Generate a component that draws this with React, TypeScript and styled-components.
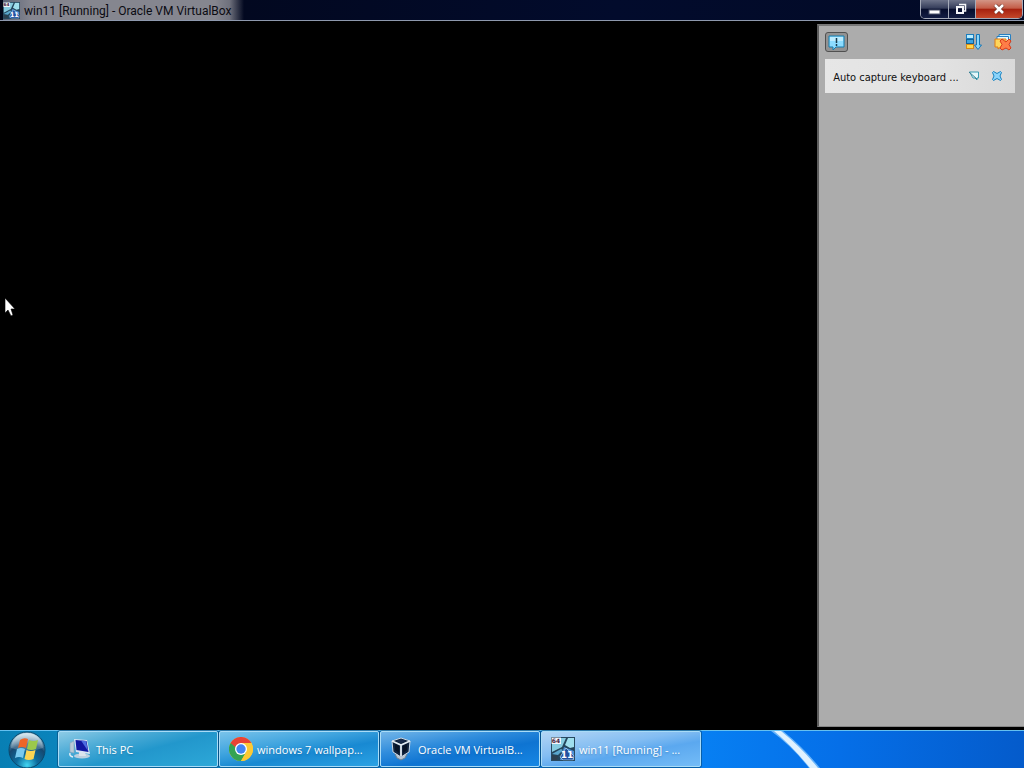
import React from "react";
import styled, { createGlobalStyle, css } from "styled-components";

const Global = createGlobalStyle`
  *, *::before, *::after { box-sizing: border-box; }
  html, body { margin: 0; background: #000; overflow: hidden; }
  body, button { font-family: "Open Sans", "Noto Sans", sans-serif; }
  button { margin: 0; padding: 0; border: 0; background: none; }
  svg { display: block; flex: none; }
`;

const Desktop = styled.div`
  display: flex;
  flex-direction: column;
  height: 100vh;
  background: #000;
`;

const TitleBar = styled.header`
  display: flex;
  align-items: flex-start;
  height: 21px;
  flex: none;
  padding-left: 3px;
  background: linear-gradient(90deg, #020618, #020b2c 60%, #020a26);
  border-bottom: 1px solid #8e99ae;
`;

const TitleGlow = styled.div`
  display: flex;
  align-items: center;
  gap: 4px;
  height: 20px;
  padding-right: 12px;
  background: linear-gradient(90deg, #5a6276 0, #85868f 28px, #85868f 88%, #6f717d 94%, #03092400 100%);
`;

const Title = styled.h1`
  margin: 0;
  padding-top: 2px;
  font-family: Roboto, sans-serif;
  font-size: 12px;
  line-height: 18px;
  font-weight: 400;
  color: #0b0b12;
  white-space: nowrap;
`;

const WindowControls = styled.div`
  display: flex;
  height: 19px;
  margin-left: auto;
  margin-right: 1px;
  border: 1px solid #a5aab8;
  border-top: 0;
  border-radius: 0 0 5px 5px;
  overflow: hidden;
`;

const WindowButton = styled.button<{ $close?: boolean }>`
  display: flex;
  align-items: center;
  justify-content: center;
  width: ${(p) => (p.$close ? 47 : 27)}px;
  background: linear-gradient(#6d7389, #353d5a 45%, #060d2c 52%, #141e44);
  & + & { border-left: 1px solid #a5aab8; }
  ${(p) =>
    p.$close &&
    css`
      background: linear-gradient(#d39586, #c45d48 45%, #a72210 52%, #c4472a);
    `}
`;

const Workspace = styled.main`
  display: flex;
  flex: 1;
  min-height: 0;
  padding: 3px 0;
`;

const GuestScreen = styled.section`
  flex: 1;
  background: #000;
`;

const NotificationCenter = styled.aside`
  width: 20.2%;
  min-width: 206px;
  padding: 6px 9px 0 6px;
  background: #acacac;
  border: 2px solid #5e5e5e;
  border-width: 2px 0 1px 2px;
  border-top-color: #777;
  border-bottom-color: #868686;
`;

const PanelTools = styled.div`
  display: flex;
  align-items: center;
  gap: 12px;
  height: 20px;
  padding-right: 3px;
  margin-bottom: 7px;
`;

const ToolButton = styled.button<{ $pressed?: boolean }>`
  display: flex;
  align-items: center;
  justify-content: center;
  width: 18px;
  height: 20px;
  ${(p) =>
    p.$pressed &&
    css`
      width: 23px;
      margin-right: auto;
      border: 1px solid #505050;
      border-radius: 3px;
      background: #929292;
    `}
`;

const Notice = styled.article`
  display: flex;
  align-items: center;
  gap: 13px;
  height: 34px;
  padding: 0 13px 0 8px;
  background: linear-gradient(90deg, #e6e6e6, #e2e2e2 60%, #d9d9d9);
`;

const NoticeText = styled.span`
  flex: 1;
  min-width: 0;
  padding-top: 3px;
  font-family: "DejaVu Sans Condensed", "DejaVu Sans", sans-serif;
  font-size: 11px;
  line-height: 16px;
  color: #101010;
  white-space: nowrap;
`;

const NoticeButton = styled.button`
  width: 10px;
  height: 10px;
`;

const TaskBar = styled.footer`
  display: flex;
  align-items: stretch;
  height: 38px;
  flex: none;
  border-top: 1px solid #64c0f0;
  background: linear-gradient(90deg, #087fb4 0, #0b8bc9 15%, #0a7bdc 45%, #0780f3 68%, #056fe8 82%, #045bcb 100%);
`;

const StartButton = styled.button`
  display: flex;
  align-items: center;
  justify-content: center;
  width: 54px;
  margin-right: 4px;
`;

const Tasks = styled.nav`
  display: flex;
  gap: 1px;
`;

const TaskButton = styled.button<{ $tint: string }>`
  display: flex;
  align-items: center;
  gap: 4px;
  width: 160px;
  height: 36px;
  padding: 0 9px;
  border: 1px solid #a9dcf7;
  border-radius: 2px;
  box-shadow: 0 0 0 1px #07497c99;
  background: ${(p) => p.$tint};
  color: #fff;
  font-size: 11px;
  line-height: 16px;
  white-space: nowrap;
`;

const TaskLabel = styled.span`
  padding-top: 2px;
  text-shadow: 0 1px 2px #0a4a8066;
`;

const Wallpaper = styled.svg`
  margin-left: 69px;
`;

const Pointer = styled.svg`
  position: absolute;
  left: 4px;
  top: 297px;
`;

const IconDigits = styled.text`
  font-family: "DejaVu Sans", sans-serif;
  font-weight: 700;
`;

function GuestIcon({ size }: { size: number }) {
  return (
    <svg width={size} height={size} viewBox="0 0 24 24" aria-hidden="true">
      <rect width="24" height="24" fill="#24455c" />
      <path d="M1 1h14l-4 9L1 15z" fill="#86cbe0" />
      <path d="M17 1h6v9l-4 1-5-3z" fill="#9fdfee" />
      <path d="M1 17l9-5 2 1-5 5-6-1z" fill="#5aa6cc" />
      <path d="M1 18l6 1-1 4H1z" fill="#2d3f4e" />
      <path d="M13 10l10 4v9H9z" fill="#4c8fd6" />
      <rect width="10" height="7" fill="#f6f6fa" />
      <IconDigits x="5" y="6" fontSize="6" textAnchor="middle" fill="#3f1c3c">64</IconDigits>
      <path d="M15 11l-6 9 3 3h10l1-4z" fill="#2352a0" stroke="#b9dcf4" strokeWidth=".7" />
      <IconDigits x="16" y="21" fontSize="9" textAnchor="middle" fill="#fff">11</IconDigits>
      <rect x=".5" y=".5" width="23" height="23" fill="none" stroke="#2c4c63" strokeOpacity=".6" />
    </svg>
  );
}

function StartOrb() {
  return (
    <svg width="38" height="37" viewBox="0 0 38 37" aria-hidden="true">
      <defs>
        <radialGradient id="orb" cx="50%" cy="92%" r="85%">
          <stop offset="0" stopColor="#42d6f2" />
          <stop offset=".35" stopColor="#0c6c9e" />
          <stop offset=".7" stopColor="#164870" />
          <stop offset="1" stopColor="#8db8cd" />
        </radialGradient>
        <linearGradient id="gloss" x2="0" y2="1">
          <stop stopColor="#fff" stopOpacity=".65" />
          <stop offset="1" stopColor="#fff" stopOpacity=".12" />
        </linearGradient>
      </defs>
      <circle cx="19" cy="19" r="18" fill="url(#orb)" stroke="#0a486d" />
      <path d="M3 17a16 15 0 0132 0q-16 6-32 0z" fill="url(#gloss)" />
      <path d="M12 9q4-3 8-1l-2 9q-4-2-8 0z" fill="#ee6527" />
      <path d="M21 9q4 2 9 0l-2 9q-5 2-9 0z" fill="#9bc94b" />
      <path d="M9 18q4-2 8 0l-2 9q-4-2-8 0z" fill="#78c9ef" />
      <path d="M18.500 19q4 2 9 0l-2 9q-5 2-9 0z" fill="#fbd453" />
    </svg>
  );
}

function ComputerIcon() {
  return (
    <svg width="24" height="24" viewBox="0 0 24 24" aria-hidden="true">
      <path d="M2 6l4-2v12l-4-1z" fill="#b9cad8" stroke="#8aa6bd" strokeWidth=".6" />
      <ellipse cx="14" cy="19" rx="8" ry="2.500" fill="#bdd0df" />
      <path d="M11 15h6l1 4h-7z" fill="#dce4ec" />
      <path d="M6 2l13 1 3 14-14-2z" fill="#d9e3f4" />
      <path d="M7.500 3l11 1 2 11-12-2z" fill="#1017a0" />
      <path d="M13 3.500l5 .5 2 10z" fill="#4c6ce0" />
      <path d="M2 16q-1 3 3 4" fill="none" stroke="#e3edf5" strokeWidth="1.500" />
    </svg>
  );
}

function ChromeIcon() {
  return (
    <svg width="24" height="24" viewBox="0 0 24 24" aria-hidden="true">
      <circle cx="12" cy="12" r="12" fill="#fcc934" />
      <path d="M1.600 6A12 12 0 0122.400 6H12v6l-5 3z" fill="#e94235" />
      <path d="M1.600 6A12 12 0 0012 24l5.200-9H12z" fill="#34a353" />
      <path d="M12 6h10.400A12 12 0 0112 24l5.200-9z" fill="#fcc934" />
      <circle cx="12" cy="12" r="6" fill="#fff" />
      <circle cx="12" cy="12" r="4.700" fill="#4285f4" />
    </svg>
  );
}

function VirtualBoxIcon() {
  return (
    <svg width="24" height="24" viewBox="1 0 24 24" aria-hidden="true">
      <path d="M6 17l6-3 6 3-2 4-4 2-4-2z" fill="#b7c5d3" stroke="#6c8193" />
      <path d="M3 4l9-3 9 3-1 11-8 5-8-5z" fill="#10233d" stroke="#cbd8e4" />
      <path d="M3 4l9 4 9-4M12 8v11" fill="none" stroke="#e4edf4" strokeWidth="1.800" />
      <path d="M7 4l5-2 5 2-5 2z" fill="#192c4c" />
      <path d="M6 7l4 2v7l-4-3zM18 7l-4 2v7l4-3z" fill="#071326" />
    </svg>
  );
}

export default function App() {
  return (
    <Desktop>
      <Global />
      <TitleBar>
        <TitleGlow>
          <GuestIcon size={17} />
          <Title>win11 [Running] - Oracle VM VirtualBox</Title>
        </TitleGlow>
        <WindowControls>
          <WindowButton aria-label="Minimize">
            <svg width="13" height="12"><rect x="1" y="7" width="11" height="4" fill="#fff" stroke="#4b526b" /></svg>
          </WindowButton>
          <WindowButton aria-label="Restore">
            <svg width="16" height="12" fill="none" stroke="#f4f5f8">
              <path d="M5 1.500h6.500V8H10" strokeWidth="1.500" />
              <rect x="3" y="4" width="6" height="6" strokeWidth="2" />
            </svg>
          </WindowButton>
          <WindowButton $close aria-label="Close">
            <svg width="12" height="10">
              <path d="M2 1l8 8M10 1L2 9" stroke="#73382e" strokeWidth="4" />
              <path d="M2 1l8 8M10 1L2 9" stroke="#fff" strokeWidth="2.500" />
            </svg>
          </WindowButton>
        </WindowControls>
      </TitleBar>

      <Workspace>
        <GuestScreen aria-label="Guest display" />
        <NotificationCenter>
          <PanelTools>
            <ToolButton $pressed aria-label="Notifications" aria-pressed="true">
              <svg width="17" height="17" viewBox="0 0 17 17">
                <path d="M1 2h15v11H8l-3 3v-3H1z" fill="#8cdcff" stroke="#167cae" />
                <path d="M2 3h13v4H2z" fill="#bcecff" />
                <path d="M8.500 4v5M8.500 10v2" stroke="#173c50" strokeWidth="1.500" />
              </svg>
            </ToolButton>
            <ToolButton aria-label="Sort notifications">
              <svg width="17" height="18" viewBox="0 0 17 18">
                <rect x="1.500" y="1.500" width="7" height="4" fill="#b8edff" stroke="#1c7dbd" />
                <rect x="1.500" y="6.500" width="7" height="4" fill="#3aa4e2" stroke="#126296" />
                <rect x="1.500" y="11.500" width="7" height="4" fill="#ffd84c" stroke="#d78915" />
                <path d="M11.500 1.500h3V12h2L13 16.500 9.500 12h2z" fill="#8ad6fa" stroke="#1777b6" />
              </svg>
            </ToolButton>
            <ToolButton aria-label="Remove finished notifications">
              <svg width="18" height="18" viewBox="0 0 18 18">
                <path d="M5 1.500h11.500V9H5z" fill="#c7efff" stroke="#287fc0" />
                <path d="M3 3.500h11.500V11H3z" fill="#e4f8ff" stroke="#287fc0" />
                <path d="M1 6h11v8H7l-3 2v-2H1z" fill="#ffd65b" stroke="#e07a13" />
                <path d="M6 8l2-2 4 3 3-3 2 2-2 3.500 2 3.500-2 2-3-2-4 2-2-2 2-3.500z" fill="#ff7d48" stroke="#d83b18" />
              </svg>
            </ToolButton>
          </PanelTools>
          <Notice>
            <NoticeText>Auto capture keyboard ...</NoticeText>
            <NoticeButton aria-label="Suppress message">
              <svg width="10" height="10" viewBox="0 0 10 10">
                <path d="M.5 1h9v6H8v2L6 7H4z" fill="#e4f7fa" stroke="#3a9bb0" />
                <path d="M0 1l8 7" stroke="#397c8e" />
              </svg>
            </NoticeButton>
            <NoticeButton aria-label="Close message">
              <svg width="10" height="10" viewBox="0 0 10 10">
                <path d="M.5 1.500l1-1L5 2.500l3.500-2 1 1L8 5l1.500 3.500-1 1L5 7.500l-3.500 2-1-1L2 5z" fill="#8bd4fb" stroke="#1681be" />
              </svg>
            </NoticeButton>
          </Notice>
        </NotificationCenter>
      </Workspace>

      <TaskBar>
        <StartButton aria-label="Start"><StartOrb /></StartButton>
        <Tasks aria-label="Running programs">
          <TaskButton $tint="linear-gradient(165deg, #8dcbe6 0, #4cabd6 30%, #2297cc 55%, #2da8d8)">
            <ComputerIcon />
            <TaskLabel>This PC</TaskLabel>
          </TaskButton>
          <TaskButton $tint="linear-gradient(170deg, #79c3ea 0, #41a5df 35%, #1889d2 60%, #2ba2e4)">
            <ChromeIcon />
            <TaskLabel>windows 7 wallpap...</TaskLabel>
          </TaskButton>
          <TaskButton $tint="linear-gradient(170deg, #72b5e8 0, #2f8cdc 35%, #0e74d2 60%, #1787e4)">
            <VirtualBoxIcon />
            <TaskLabel>Oracle VM VirtualB...</TaskLabel>
          </TaskButton>
          <TaskButton $tint="linear-gradient(170deg, #b2d5f5 0, #83bdf2 40%, #5ba8ef 60%, #74bcf7)" aria-current="true">
            <GuestIcon size={24} />
            <TaskLabel>win11 [Running] - ...</TaskLabel>
          </TaskButton>
        </Tasks>
        <Wallpaper width="52" height="37" viewBox="0 0 52 37" aria-hidden="true">
          <path d="M1 0h12q21 17 37 37H39Q22 15 1 0z" fill="#69b5fb" />
          <path d="M4 0h7q21 17 37 37h-8Q23 16 4 0z" fill="#e0f2ff" />
        </Wallpaper>
      </TaskBar>

      <Pointer width="13" height="20" viewBox="0 0 13 20" aria-hidden="true">
        <path d="M1 1v15l3-3 3 6 2-1-2-6h4z" fill="#fff" stroke="#000" strokeWidth=".6" />
      </Pointer>
    </Desktop>
  );
}
